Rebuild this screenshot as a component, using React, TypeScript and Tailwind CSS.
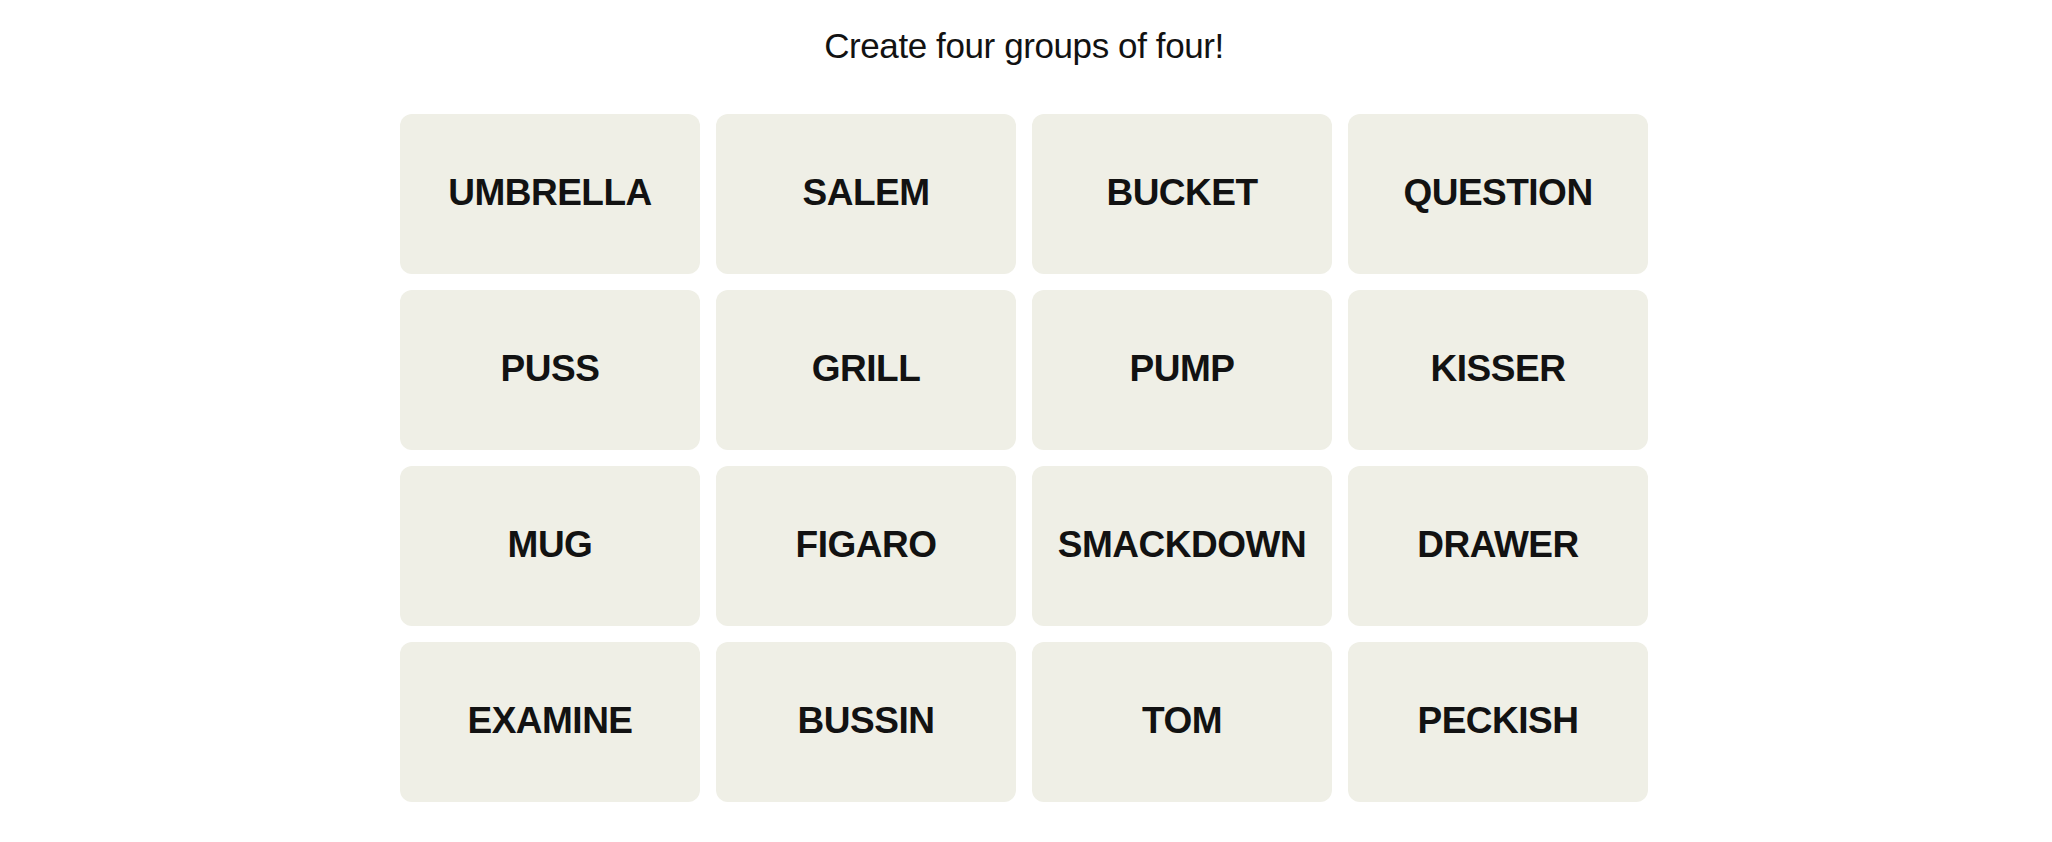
import React from "react";

const WORDS = [
  "UMBRELLA", "SALEM", "BUCKET", "QUESTION",
  "PUSS", "GRILL", "PUMP", "KISSER",
  "MUG", "FIGARO", "SMACKDOWN", "DRAWER",
  "EXAMINE", "BUSSIN", "TOM", "PECKISH",
];

function Tile({ word }: { word: string }) {
  return (
    <button
      type="button"
      className="flex h-[160px] w-[300px] items-center justify-center rounded-[12px] bg-[#efefe6] pb-[3px] text-[37px] font-bold uppercase leading-[37px] tracking-[-0.5px] text-[#121212]"
    >
      {word}
    </button>
  );
}

export default function App() {
  return (
    <div
      className="min-h-[842px] w-full bg-white pr-[4px] pt-[26px] text-[#121212]"
      style={{ fontFamily: '"Liberation Sans", Arial, sans-serif' }}
    >
      <p className="text-center text-[35px] leading-[40px] tracking-[-0.4px]">
        Create four groups of four!
      </p>
      <div className="mx-auto mt-[48px] grid w-[1248px] grid-cols-4 gap-[16px]">
        {WORDS.map((w) => (
          <Tile key={w} word={w} />
        ))}
      </div>
    </div>
  );
}
